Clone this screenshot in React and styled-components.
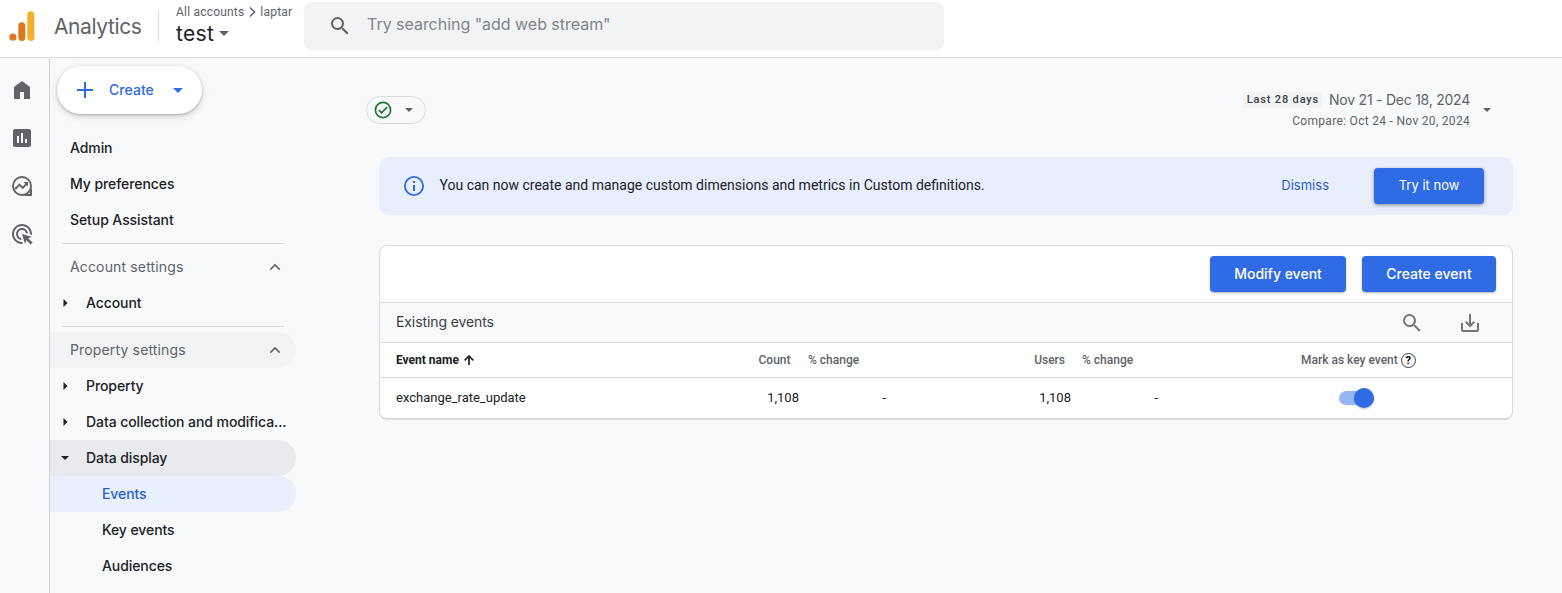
import React from "react";
import styled, { createGlobalStyle, css } from "styled-components";
import { MdAssessment, MdAdsClick, MdSearch } from "react-icons/md";

const display = css`font-family: Inter, "Open Sans", sans-serif;`;

const Global = createGlobalStyle`
  *, *::before, *::after { box-sizing: border-box; }
  html, body { margin: 0; padding: 0; }
  body { font-family: Roboto, sans-serif; color: #202124; background: #f8f9fb; overflow: hidden; }
  button { border: 0; background: none; padding: 0; margin: 0; }
  svg { display: block; flex: none; }
`;

const Page = styled.div`
  display: flex;
  flex-direction: column;
  height: 593px;
  overflow: hidden;
`;

const Header = styled.header`
  display: flex;
  flex: none;
  height: 58px;
  background: #fff;
  border-bottom: 1px solid #dadce0;
`;

const Brand = styled.div`
  display: flex;
  width: 159px;
  height: 32px;
  margin-top: 10px;
  padding-left: 9px;
  border-right: 1px solid #dadce0;
`;

const BrandName = styled.span`
  ${display}
  margin-left: 18px;
  line-height: 34px;
  font-size: 21px;
  letter-spacing: -0.4px;
  color: #5f6368;
`;

const Property = styled.div`
  width: 145px;
  padding: 4px 0 0 17px;
`;

const Crumbs = styled.div`
  display: flex;
  align-items: center;
  height: 16px;
  font-size: 12px;
  letter-spacing: 0.2px;
  color: #5f6368;
  white-space: nowrap;
  svg { margin: 0 4px 0 5px; }
`;

const PropertyName = styled.div`
  ${display}
  display: flex;
  align-items: center;
  height: 26px;
  font-size: 21px;
  letter-spacing: 0.3px;
  color: #202124;
  svg { margin: 1px 0 0 5px; color: #5f6368; }
`;

const SearchBar = styled.div`
  ${display}
  display: flex;
  align-items: center;
  width: 640px;
  height: 48px;
  margin-top: 2px;
  padding: 0 24px;
  border-radius: 8px;
  background: #f1f3f4;
  color: #80868b;
  font-size: 16px;
  letter-spacing: -0.03px;
  svg { margin-top: -1px; color: #5f6368; }
  span { margin: -4px 0 0 15px; }
`;

const Body = styled.div`
  display: flex;
  flex: 1;
  min-height: 0;
`;

const Rail = styled.nav`
  display: flex;
  flex-direction: column;
  flex: none;
  gap: 24px;
  width: 50px;
  padding: 20px 0 0 10px;
  border-right: 1px solid #d0d3d6;
  color: #5f6368;
`;

const Sidebar = styled.aside`
  ${display}
  flex: none;
  width: 250px;
  padding-top: 8px;
`;

const CreateButton = styled.button`
  ${display}
  display: flex;
  align-items: center;
  width: 145px;
  height: 48px;
  margin: 0 0 16px 7px;
  padding-left: 20px;
  border-radius: 24px;
  background: #fff;
  box-shadow: 0 1px 3px rgba(60, 64, 67, 0.32), 0 3px 7px rgba(60, 64, 67, 0.16);
  color: #2f6be4;
  font-size: 14px;
  font-weight: 500;
  span { width: 45px; margin: 0 19px 0 16px; padding-bottom: 2px; letter-spacing: 0.05px; text-align: left; }
`;

const tones = { hover: "#f1f3f4", open: "#e8eaed", active: "#e8effd" };

const NavItem = styled.div`
  display: flex;
  align-items: center;
  width: 246px;
  height: 36px;
  padding: 0 ${(p) => (p.$group ? 15 : 8)}px 0 ${(p) => (p.$tree ? 9 : p.$nested ? 52 : 20)}px;
  border-radius: 0 18px 18px 0;
  background: ${(p) => tones[p.$tone] || "transparent"};
  color: ${(p) => (p.$group ? "#5f6368" : p.$tone === "active" ? "#2860cd" : "#202124")};
  font-size: 14px;
  font-weight: ${(p) => (p.$group ? 400 : 500)};
  letter-spacing: ${(p) => (p.$group ? 0.15 : -0.08)}px;
  white-space: nowrap;
`;

const NavText = styled.span`
  flex: 1;
  padding-bottom: 2px;
  margin-left: ${(p) => (p.$tree ? 15 : 0)}px;
`;

const Rule = styled.hr`
  width: 222px;
  height: 1px;
  margin: 5px 0 5px 12px;
  border: 0;
  background: #dadce0;
`;

const Main = styled.main`
  flex: 1;
  padding: 29px 49px 0 79px;
`;

const Toolbar = styled.div`
  display: flex;
  justify-content: space-between;
  margin: 0 22px 0 -13px;
`;

const StatusChip = styled.div`
  display: flex;
  align-items: center;
  gap: 13px;
  width: 60px;
  height: 28px;
  margin-top: 9px;
  padding-left: 7px;
  border: 1px solid #dadce0;
  border-radius: 14px;
  color: #5f6368;
`;

const DatePicker = styled.div`
  display: flex;
  align-items: center;
  gap: 13px;
  height: 46px;
  color: #5f6368;
`;

const DateLines = styled.div`
  display: flex;
  flex-direction: column;
  align-items: flex-end;
`;

const DateRange = styled.div`
  ${display}
  display: flex;
  align-items: center;
  gap: 7px;
  height: 24px;
  padding-bottom: 4px;
  font-size: 14px;
  letter-spacing: -0.24px;
`;

const DateBadge = styled.span`
  height: 16px;
  margin-top: 2px;
  padding: 0 3px 0 4px;
  border-radius: 1px;
  background: #f1f3f4;
  color: #3c4043;
  font: 500 11px/15px Roboto, sans-serif;
  letter-spacing: 0.84px;
`;

const Compare = styled.div`
  height: 18px;
  font-size: 12px;
  line-height: 17px;
  letter-spacing: 0.3px;
`;

const Banner = styled.section`
  display: flex;
  align-items: center;
  height: 58px;
  margin-top: 24px;
  padding: 0 29px 0 23px;
  border-radius: 10px;
  background: #e8eefc;
`;

const BannerText = styled.p`
  flex: 1;
  margin: 0 0 0 13.5px;
  padding-bottom: 2px;
  font-size: 14px;
  line-height: 20px;
`;

const TextButton = styled.button`
  ${display}
  margin-right: 45px;
  padding-bottom: 2px;
  color: #2860cd;
  font-size: 13px;
  letter-spacing: 0;
`;

const Button = styled.button`
  ${display}
  width: ${(p) => p.$width}px;
  height: 36px;
  padding-bottom: ${(p) => (p.$raised ? 2 : 0)}px;
  border-radius: 4px;
  background: #2f6be4;
  box-shadow: ${(p) => (p.$raised
    ? "0 1px 3px rgba(60, 64, 67, 0.4), 0 2px 4px rgba(60, 64, 67, 0.18)"
    : "0 1px 2px rgba(60, 64, 67, 0.4)")};
  color: #fff;
  font-size: ${(p) => (p.$raised ? 13 : 14)}px;
  font-weight: ${(p) => (p.$raised ? 400 : 500)};
`;

const Card = styled.section`
  height: 175px;
  margin-top: 30px;
  border: 1px solid #dadce0;
  border-bottom-width: 2px;
  border-radius: 8px;
  background: #fff;
  overflow: hidden;
`;

const CardActions = styled.div`
  display: flex;
  justify-content: flex-end;
  align-items: center;
  gap: 16px;
  height: 57px;
  padding: 0 16px 1px 0;
  border-bottom: 1px solid #dadce0;
`;

const TableTitle = styled.div`
  ${display}
  display: flex;
  align-items: center;
  height: 40px;
  padding: 0 30px 0 16px;
  border-bottom: 1px solid #dadce0;
  background: #f8f9fb;
  color: #3c4043;
  font-size: 14px;
  letter-spacing: -0.1px;
  span { flex: 1; padding-bottom: 2px; }
  svg { color: #757575; }
  svg + svg { margin-left: 34px; }
`;

const TableRow = styled.div`
  display: grid;
  grid-template-columns: 419px 87px 185px 87px 1fr;
  align-items: center;
  height: ${(p) => (p.$head ? 35 : 40)}px;
  border-bottom: ${(p) => (p.$head ? "1px solid #dadce0" : "0")};
  font-size: ${(p) => (p.$head ? 12 : 13)}px;
  line-height: ${(p) => (p.$head ? 14 : 16)}px;
  font-weight: ${(p) => (p.$head ? 500 : 400)};
  color: ${(p) => (p.$head ? "#5f6368" : "#202124")};
`;

const NameAndCount = styled.div`
  display: flex;
  justify-content: space-between;
  align-items: center;
  padding: 0 ${(p) => p.$end || 0}px 0 16px;
`;

const EventName = styled.span`
  display: flex;
  align-items: center;
  color: #202124;
  font-weight: ${(p) => (p.$head ? 700 : 400)};
  svg { margin-left: 5px; }
`;

const Cell = styled.div`
  padding: 0 ${(p) => p.$end || 0}px 0 ${(p) => p.$start || 0}px;
  text-align: ${(p) => p.$align || "right"};
  white-space: nowrap;
`;

const KeyCell = styled.div`
  display: flex;
  align-items: center;
  padding-left: ${(p) => p.$start}px;
`;

const Help = styled.span`
  display: flex;
  justify-content: center;
  width: 15px;
  height: 15px;
  margin-left: 3px;
  border: 1px solid #3c4043;
  border-radius: 50%;
  color: #000;
  font: 700 11px/13px Roboto, sans-serif;
`;

const Switch = styled.span`
  display: flex;
  align-items: center;
  justify-content: flex-end;
  width: 35px;
  height: 14px;
  border-radius: 7px;
  background: #97b5f1;
  &::after {
    content: "";
    flex: none;
    width: 20px;
    height: 20px;
    border-radius: 50%;
    background: #2f6be4;
    box-shadow: 0 1px 2px rgba(0, 0, 0, 0.25);
  }
`;

const Caret = ({ w = 10, h = 5 }) => (
  <svg width={w} height={h} viewBox="0 0 10 5"><path d="M0 0h10L5 5z" fill="currentColor" /></svg>
);

const TreeArrow = ({ open }) => (
  <svg width="12" height="12" viewBox="0 0 12 12">
    <path d={open ? "M2 4h8L6 8z" : "M4.5 2v8l4-4z"} fill="#202124" />
  </svg>
);

const SortArrow = () => (
  <svg width="10" height="10" viewBox="0 0 10 10">
    <path d="M5 10V1.3M.7 5.3 5 1l4.3 4.3" fill="none" stroke="currentColor" strokeWidth="1.7" />
  </svg>
);

const ChevronUp = () => (
  <svg width="12" height="8" viewBox="0 0 12 8">
    <path d="M1.3 6.6 6 1.9l4.7 4.7" fill="none" stroke="#5f6368" strokeWidth="1.5" />
  </svg>
);

const Logo = () => (
  <svg width="27" height="32" viewBox="0 0 27 32">
    <rect x="18.3" y="1.3" width="7" height="29.6" rx="3.5" fill="#f2b02c" />
    <rect x="9.3" y="12.2" width="7" height="18.7" rx="3.5" fill="#d97a22" />
    <circle cx="3.9" cy="27.2" r="3.6" fill="#d97a22" />
  </svg>
);

const HomeIcon = () => (
  <svg width="24" height="24" viewBox="0 0 24 24"><path d="M4 21V9l8-6 8 6v12h-6v-7h-4v7z" fill="currentColor" /></svg>
);

const ExploreIcon = () => (
  <svg width="24" height="24" viewBox="0 0 24 24">
    <g fill="none" stroke="currentColor" strokeWidth="1.9">
      <circle cx="12" cy="12" r="9" />
      <path d="m5.2 15 4.3-4.3 3.2 3.2L17.4 9" />
    </g>
    <path d="M13.5 8H18v4.5zM22 12v10H12c4.5-.4 9.5-4 10-10z" fill="currentColor" />
    <circle cx="19.2" cy="19.2" r=".8" fill="#f8f9fb" />
  </svg>
);

const CheckIcon = () => (
  <svg width="18" height="18" viewBox="0 0 18 18" fill="none" stroke="#267332" strokeWidth="1.7">
    <circle cx="9" cy="9" r="7.6" />
    <path d="m4.8 9.2 2.7 2.7 5.7-5.7" />
  </svg>
);

const InfoIcon = () => (
  <svg width="24" height="24" viewBox="0 0 24 24">
    <circle cx="12" cy="12" r="9.1" fill="none" stroke="#2f6be4" strokeWidth="1.8" />
    <path d="M11 7h2v2h-2zM11 11h2v6h-2z" fill="#2f6be4" />
  </svg>
);

const DownloadIcon = () => (
  <svg width="24" height="24" viewBox="0 0 24 24" fill="none" stroke="currentColor" strokeWidth="2">
    <path d="M4 12v7q0 1 1 1h14q1 0 1-1v-7M12 3v11.5M7.7 10.7l4.3 4.3 4.3-4.3" />
  </svg>
);

const PlusIcon = () => (
  <svg width="16" height="16" viewBox="0 0 16 16"><path d="M7 0h2v7h7v2H9v7H7V9H0V7h7z" fill="currentColor" /></svg>
);

const NavLink = ({ children, ...rest }) => (
  <NavItem {...rest}><NavText>{children}</NavText></NavItem>
);

const NavGroup = ({ children, ...rest }) => (
  <NavItem $group {...rest}><NavText>{children}</NavText><ChevronUp /></NavItem>
);

const TreeItem = ({ children, open, ...rest }) => (
  <NavItem $tree {...rest}><TreeArrow open={open} /><NavText $tree>{children}</NavText></NavItem>
);

export default function App() {
  return (
    <Page>
      <Global />
      <Header>
        <Brand><Logo /><BrandName>Analytics</BrandName></Brand>
        <Property>
          <Crumbs>
            All accounts
            <svg width="7" height="12" viewBox="0 0 7 12"><path d="m1 1.5 4.5 4.5L1 10.5" fill="none" stroke="currentColor" strokeWidth="1.5" /></svg>
            laptar
          </Crumbs>
          <PropertyName>test<Caret /></PropertyName>
        </Property>
        <SearchBar><MdSearch size={24} /><span>Try searching "add web stream"</span></SearchBar>
      </Header>
      <Body>
        <Rail>
          <HomeIcon />
          <MdAssessment size={24} />
          <ExploreIcon />
          <MdAdsClick size={24} />
        </Rail>
        <Sidebar>
          <CreateButton><PlusIcon /><span>Create</span><Caret /></CreateButton>
          <NavLink>Admin</NavLink>
          <NavLink>My preferences</NavLink>
          <NavLink>Setup Assistant</NavLink>
          <Rule />
          <NavGroup>Account settings</NavGroup>
          <TreeItem>Account</TreeItem>
          <Rule />
          <NavGroup $tone="hover">Property settings</NavGroup>
          <TreeItem>Property</TreeItem>
          <TreeItem>Data collection and modifica...</TreeItem>
          <TreeItem open $tone="open">Data display</TreeItem>
          <NavLink $nested $tone="active">Events</NavLink>
          <NavLink $nested>Key events</NavLink>
          <NavLink $nested>Audiences</NavLink>
        </Sidebar>
        <Main>
          <Toolbar>
            <StatusChip><CheckIcon /><Caret w={8} h={4} /></StatusChip>
            <DatePicker>
              <DateLines>
                <DateRange><DateBadge>Last 28 days</DateBadge>Nov 21 - Dec 18, 2024</DateRange>
                <Compare>Compare: Oct 24 - Nov 20, 2024</Compare>
              </DateLines>
              <Caret w={8} h={4} />
            </DatePicker>
          </Toolbar>
          <Banner>
            <InfoIcon />
            <BannerText>You can now create and manage custom dimensions and metrics in Custom definitions.</BannerText>
            <TextButton>Dismiss</TextButton>
            <Button $width={110} $raised>Try it now</Button>
          </Banner>
          <Card>
            <CardActions>
              <Button $width={136}>Modify event</Button>
              <Button $width={134}>Create event</Button>
            </CardActions>
            <TableTitle><span>Existing events</span><MdSearch size={24} /><DownloadIcon /></TableTitle>
            <TableRow $head>
              <NameAndCount $end={8.5}>
                <EventName $head>Event name<SortArrow /></EventName>
                <span>Count</span>
              </NameAndCount>
              <Cell $align="left" $start={9}>% change</Cell>
              <Cell $end={6}>Users</Cell>
              <Cell $align="left" $start={11}>% change</Cell>
              <KeyCell $start={143}>Mark as key event<Help>?</Help></KeyCell>
            </TableRow>
            <TableRow>
              <NameAndCount><EventName>exchange_rate_update</EventName><span>1,108</span></NameAndCount>
              <Cell>-</Cell>
              <Cell>1,108</Cell>
              <Cell>-</Cell>
              <KeyCell $start={181}><Switch /></KeyCell>
            </TableRow>
          </Card>
        </Main>
      </Body>
    </Page>
  );
}
